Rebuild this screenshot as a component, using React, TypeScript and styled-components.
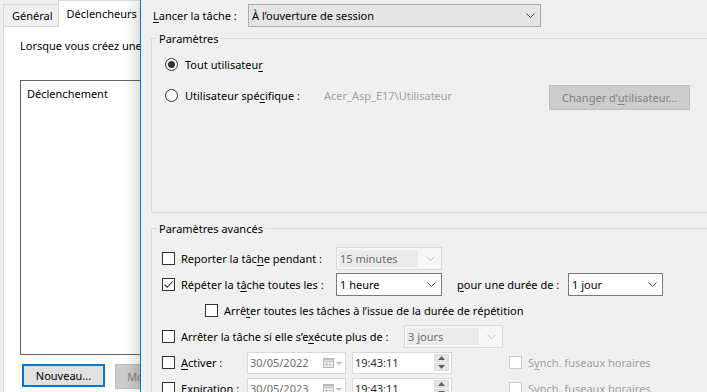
import React from "react";
import styled, { createGlobalStyle } from "styled-components";

const GlobalStyle = createGlobalStyle`
  html, body {
    margin: 0;
    padding: 0;
    background: #ffffff;
  }
  body {
    font-family: "Noto Sans", "Open Sans", sans-serif;
    font-size: 11px;
    color: #000000;
  }
  * {
    box-sizing: border-box;
  }
`;

const Screen = styled.div`
  display: flex;
  width: 707px;
  height: 392px;
  overflow: hidden;
`;

/* ---------- window behind the dialog ---------- */

const BackWindow = styled.div`
  flex: none;
  width: 140px;
  display: flex;
  flex-direction: column;
  background: #f0f0f0;
  overflow: hidden;
`;

const TabStrip = styled.div`
  flex: none;
  display: flex;
  align-items: flex-end;
  height: 26px;
  padding-left: 3px;
`;

const Tab = styled.div<{ $active?: boolean }>`
  position: relative;
  z-index: 1;
  flex: none;
  display: flex;
  align-items: center;
  height: ${(p) => (p.$active ? 27 : 22)}px;
  margin-bottom: ${(p) => (p.$active ? -1 : 0)}px;
  padding: ${(p) => (p.$active ? "0 8px 2px 8px" : "0 5px 0 8px")};
  background: ${(p) => (p.$active ? "#ffffff" : "#f0f0f0")};
  border: 1px solid #d9d9d9;
  border-bottom: none;
  border-right: ${(p) => (p.$active ? "1px solid #d9d9d9" : "none")};
  white-space: nowrap;
`;

const TabPanel = styled.div`
  flex: 1;
  width: 420px;
  margin-left: 3px;
  padding: 11px 0 0 16px;
  background: #ffffff;
  border-left: 1px solid #d9d9d9;
  border-top: 1px solid #d9d9d9;
  display: flex;
  flex-direction: column;
`;

const Intro = styled.div`
  line-height: 15px;
  white-space: nowrap;
`;

const TriggerList = styled.div`
  margin-top: 27px;
  height: 275px;
  border: 1px solid #646464;
  padding: 5px 6px;
  line-height: 15px;
`;

const PanelButtons = styled.div`
  display: flex;
  gap: 10px;
  margin-top: 9px;
  padding-left: 2px;
`;

const PushButton = styled.div<{ $focused?: boolean; $disabled?: boolean }>`
  flex: none;
  display: flex;
  align-items: center;
  justify-content: center;
  height: ${(p) => (p.$focused ? 23 : 25)}px;
  padding: 0 10px;
  min-width: ${(p) => (p.$focused ? 83 : 75)}px;
  background: ${(p) => (p.$disabled ? "#cccccc" : "#e1e1e1")};
  border: ${(p) =>
    p.$focused ? "2px solid #0078d7" : p.$disabled ? "1px solid #bfbfbf" : "1px solid #adadad"};
  color: ${(p) => (p.$disabled ? "#838383" : "#000000")};
  white-space: nowrap;
`;

/* ---------- dialog ---------- */

const Dialog = styled.div`
  position: relative;
  z-index: 2;
  flex: none;
  width: 640px;
  background: #f0f0f0;
  border-left: 1px solid #0078d7;
  box-shadow: -5px 0 12px rgba(0, 0, 0, 0.16);
  padding: 4px 0 0 10px;
  display: flex;
  flex-direction: column;
`;

const LaunchRow = styled.div`
  display: flex;
  align-items: center;
  height: 23px;
  padding-left: 2px;
`;

const FieldLabel = styled.span<{ $width?: number; $muted?: boolean; $gapLeft?: number }>`
  flex: none;
  width: ${(p) => (p.$width ? `${p.$width}px` : "auto")};
  margin-left: ${(p) => p.$gapLeft ?? 0}px;
  color: ${(p) => (p.$muted ? "#a0a0a0" : "#000000")};
  white-space: nowrap;
  line-height: 15px;
`;

const Key = styled.span`
  text-decoration: underline;
  text-underline-offset: 2px;
`;

const GroupBox = styled.fieldset<{ $height: number; $gapTop: number }>`
  margin: ${(p) => p.$gapTop}px 0 0 0;
  padding: 0;
  min-width: 0;
  height: ${(p) => p.$height}px;
  border: 1px solid #dcdcdc;
  flex: none;
`;

const Legend = styled.legend`
  margin-left: 5px;
  padding: 0 2px;
  line-height: 15px;
`;

const GroupBody = styled.div<{ $padTop: number; $padLeft: number; $gap: number }>`
  display: flex;
  flex-direction: column;
  gap: ${(p) => p.$gap}px;
  padding: ${(p) => p.$padTop}px 0 0 ${(p) => p.$padLeft}px;
`;

const OptionRow = styled.div<{ $height: number; $indent?: number }>`
  display: flex;
  align-items: center;
  height: ${(p) => p.$height}px;
  padding-left: ${(p) => p.$indent ?? 0}px;
`;

const RadioRow = styled.div`
  display: flex;
  align-items: flex-start;
  height: 25px;
`;

const RadioLine = styled.div`
  display: flex;
  align-items: center;
  height: 21px;
`;

const Radio = styled.span<{ $checked?: boolean }>`
  flex: none;
  width: 13px;
  height: 13px;
  margin-right: 7px;
  border-radius: 50%;
  border: 1px solid #333333;
  background: #ffffff;
  display: flex;
  align-items: center;
  justify-content: center;
  &::after {
    content: "";
    display: ${(p) => (p.$checked ? "block" : "none")};
    width: 7px;
    height: 7px;
    border-radius: 50%;
    background: #333333;
  }
`;

const CheckBox = styled.span<{ $disabled?: boolean; $gapLeft?: number }>`
  flex: none;
  width: 13px;
  height: 13px;
  margin-left: ${(p) => p.$gapLeft ?? 0}px;
  margin-right: 6px;
  border: 1px solid ${(p) => (p.$disabled ? "#cccccc" : "#333333")};
  background: #ffffff;
  display: flex;
  align-items: center;
  justify-content: center;
`;

const DisabledButton = styled.div`
  flex: none;
  display: flex;
  align-items: center;
  justify-content: center;
  width: 141px;
  height: 25px;
  background: #cccccc;
  border: 1px solid #bfbfbf;
  color: #838383;
  white-space: nowrap;
`;

type ComboTone = "readonly" | "white" | "disabled";

const ComboBox = styled.div<{ $width: number; $tone: ComboTone; $gapLeft?: number }>`
  flex: none;
  display: flex;
  align-items: center;
  justify-content: space-between;
  width: ${(p) => p.$width}px;
  height: 23px;
  margin-left: ${(p) => p.$gapLeft ?? 0}px;
  padding: ${(p) => (p.$tone === "disabled" ? "2px 6px 2px 2px" : "0 5px 0 3px")};
  background: ${(p) =>
    p.$tone === "readonly" ? "#e5e5e5" : p.$tone === "white" ? "#ffffff" : "#f7f7f7"};
  border: 1px solid
    ${(p) => (p.$tone === "readonly" ? "#adadad" : p.$tone === "white" ? "#7a7a7a" : "#d9d9d9")};
  color: ${(p) => (p.$tone === "disabled" ? "#6d6d6d" : "#000000")};
  white-space: nowrap;
`;

const ComboText = styled.span<{ $tone: ComboTone }>`
  flex: 1;
  align-self: stretch;
  display: flex;
  align-items: center;
  padding-left: ${(p) => (p.$tone === "disabled" ? 1 : 0)}px;
  margin-right: ${(p) => (p.$tone === "disabled" ? 8 : 0)}px;
  background: ${(p) => (p.$tone === "disabled" ? "#ebebeb" : "transparent")};
`;

const DateField = styled.div<{ $width: number; $gapLeft?: number }>`
  flex: none;
  display: flex;
  align-items: center;
  width: ${(p) => p.$width}px;
  height: 22px;
  margin-left: ${(p) => p.$gapLeft ?? 0}px;
  padding: 0 2px 0 2px;
  background: #ffffff;
  border: 1px solid #d9d9d9;
  white-space: nowrap;
`;

const DateText = styled.span<{ $dark?: boolean }>`
  flex: 1;
  color: ${(p) => (p.$dark ? "#2b2b2b" : "#6d6d6d")};
`;

const Spinner = styled.div`
  flex: none;
  display: flex;
  flex-direction: column;
  gap: 1px;
  width: 15px;
`;

const SpinButton = styled.div`
  height: 8px;
  display: flex;
  align-items: center;
  justify-content: center;
  background: #e6e6e6;
  border: 1px solid #dadada;
`;

const SyncLabel = styled.span`
  color: #a0a0a0;
  white-space: nowrap;
`;

/* ---------- drawings ---------- */

const Chevron = ({ color = "#444444" }: { color?: string }) => (
  <svg width="9" height="5" viewBox="0 0 9 5">
    <path d="M0.5 0.5 L4.5 4.5 L8.5 0.5" fill="none" stroke={color} strokeWidth="1" />
  </svg>
);

const CheckMark = () => (
  <svg width="11" height="11" viewBox="0 0 11 11">
    <path d="M1.5 5.5 L4.2 8.2 L9.5 2.5" fill="none" stroke="#333333" strokeWidth="1.1" />
  </svg>
);

const CalendarGlyph = () => (
  <svg width="20" height="10" viewBox="0 0 20 10">
    <rect x="0.5" y="0.5" width="10" height="9" fill="#f4f4f4" stroke="#b4b4b4" />
    <path d="M0.5 3.5 H10.5 M0.5 6.5 H10.5 M3.5 3 V10 M7 3 V10" stroke="#c8c8c8" strokeWidth="1" />
    <rect x="0.5" y="0.5" width="10" height="2" fill="#c0c0c0" />
    <path d="M13 4 L19 4 L16 7 Z" fill="#b8b8b8" />
  </svg>
);

const SpinArrow = ({ up }: { up?: boolean }) => (
  <svg width="7" height="4" viewBox="0 0 7 4">
    <path d={up ? "M0 4 L3.5 0 L7 4 Z" : "M0 0 L3.5 4 L7 0 Z"} fill="#606060" />
  </svg>
);

/* ---------- small parts ---------- */

const Combo = ({
  text,
  width,
  tone,
  gapLeft,
}: {
  text: string;
  width: number;
  tone: ComboTone;
  gapLeft?: number;
}) => (
  <ComboBox $width={width} $tone={tone} $gapLeft={gapLeft}>
    <ComboText $tone={tone}>{text}</ComboText>
    <Chevron color={tone === "disabled" ? "#c0c0c0" : "#444444"} />
  </ComboBox>
);

const DateTimeRow = ({ label, date }: { label: React.ReactNode; date: string }) => (
  <OptionRow $height={23}>
    <CheckBox />
    <FieldLabel $width={66}>{label}</FieldLabel>
    <DateField $width={99}>
      <DateText>{date}</DateText>
      <CalendarGlyph />
    </DateField>
    <DateField $width={100} $gapLeft={6}>
      <DateText $dark>19:43:11</DateText>
      <Spinner>
        <SpinButton>
          <SpinArrow up />
        </SpinButton>
        <SpinButton>
          <SpinArrow />
        </SpinButton>
      </Spinner>
    </DateField>
    <CheckBox $disabled $gapLeft={57} />
    <SyncLabel>
      S<Key>y</Key>nch. fuseaux horaires
    </SyncLabel>
  </OptionRow>
);

const App = () => {
  return (
    <Screen>
      <GlobalStyle />
      <BackWindow>
        <TabStrip>
          <Tab>Général</Tab>
          <Tab $active>Déclencheurs</Tab>
        </TabStrip>
        <TabPanel>
          <Intro>Lorsque vous créez une tâche, vous pouvez spécifier les conditions</Intro>
          <TriggerList>Déclenchement</TriggerList>
          <PanelButtons>
            <PushButton $focused>Nouveau...</PushButton>
            <PushButton $disabled>Modifier...</PushButton>
          </PanelButtons>
        </TabPanel>
      </BackWindow>

      <Dialog>
        <LaunchRow>
          <FieldLabel $width={95}>
            <Key>L</Key>ancer la tâche :
          </FieldLabel>
          <Combo text="À l’ouverture de session" width={293} tone="readonly" />
        </LaunchRow>

        <GroupBox $height={182} $gapTop={4}>
          <Legend>Paramètres</Legend>
          <GroupBody $padTop={8} $padLeft={13} $gap={10}>
            <RadioLine>
              <Radio $checked />
              <FieldLabel>
                Tout utilisateu<Key>r</Key>
              </FieldLabel>
            </RadioLine>
            <RadioRow>
              <RadioLine>
                <Radio />
                <FieldLabel $width={139}>
                  Utilisateur spé<Key>c</Key>ifique :
                </FieldLabel>
                <FieldLabel $width={225} $muted>
                  Acer_Asp_E17\Utilisateur
                </FieldLabel>
              </RadioLine>
              <DisabledButton>
                Changer d’<Key>u</Key>tilisateur...
              </DisabledButton>
            </RadioRow>
          </GroupBody>
        </GroupBox>

        <GroupBox $height={200} $gapTop={8}>
          <Legend>Paramètres avancés</Legend>
          <GroupBody $padTop={11} $padLeft={10} $gap={3}>
            <OptionRow $height={23}>
              <CheckBox />
              <FieldLabel $width={155}>
                Reporter la tâc<Key>h</Key>e pendant :
              </FieldLabel>
              <Combo text="15 minutes" width={106} tone="disabled" />
            </OptionRow>

            <OptionRow $height={23}>
              <CheckBox>
                <CheckMark />
              </CheckBox>
              <FieldLabel $width={155}>
                Répéter la t<Key>â</Key>che toutes les :
              </FieldLabel>
              <Combo text="1 heure" width={106} tone="white" />
              <FieldLabel $width={111} $gapLeft={15}>
                <Key>p</Key>our une durée de :
              </FieldLabel>
              <Combo text="1 jour" width={95} tone="white" />
            </OptionRow>

            <OptionRow $height={23} $indent={43}>
              <CheckBox />
              <FieldLabel>
                Arrê<Key>t</Key>er toutes les tâches à l’issue de la durée de répétition
              </FieldLabel>
            </OptionRow>

            <OptionRow $height={23}>
              <CheckBox />
              <FieldLabel $width={223}>
                Arrêter la tâche si elle s’e<Key>x</Key>écute plus de :
              </FieldLabel>
              <Combo text="3 jours" width={99} tone="disabled" />
            </OptionRow>

            <DateTimeRow
              label={
                <>
                  <Key>A</Key>ctiver :
                </>
              }
              date="30/05/2022"
            />
            <DateTimeRow
              label={
                <>
                  E<Key>x</Key>piration :
                </>
              }
              date="30/05/2023"
            />
          </GroupBody>
        </GroupBox>
      </Dialog>
    </Screen>
  );
};

export default App;
